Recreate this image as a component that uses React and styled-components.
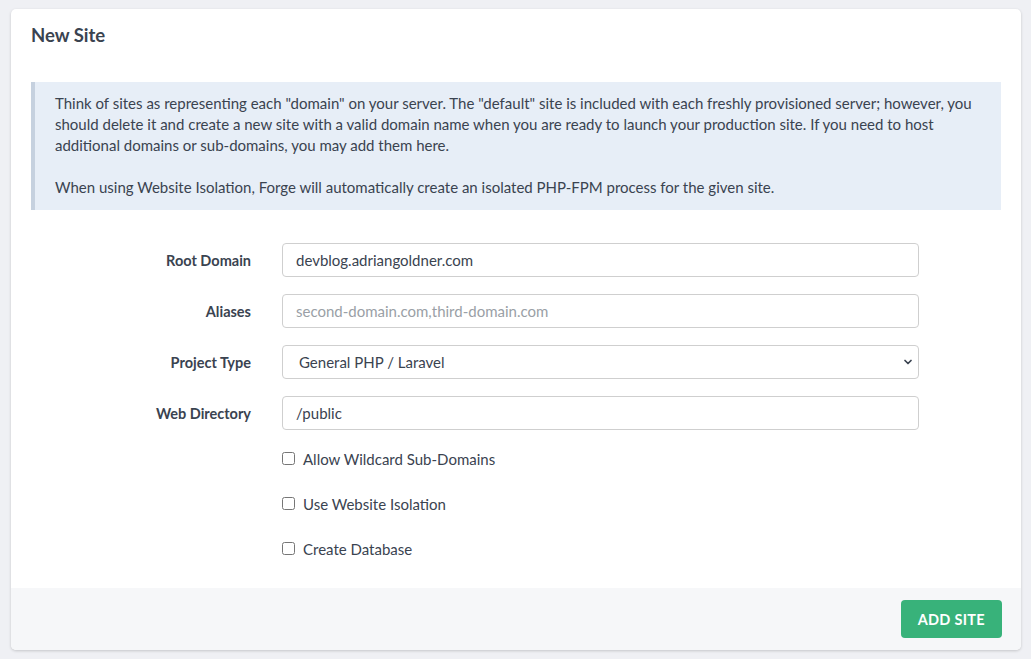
import React from "react";
import styled, { createGlobalStyle } from "styled-components";
import { ChevronDown } from "lucide-react";

const Global = createGlobalStyle`
  * { box-sizing: border-box; }
  body {
    margin: 0;
    background: #eff0f4;
    font-family: "Lato", "Noto Sans", sans-serif;
    color: #3a4350;
  }
`;

const Page = styled.div`
  padding: 9px 10px 8px 11px;
`;

const Card = styled.div`
  background: #fff;
  border-radius: 5px;
  box-shadow: 0 1px 3px rgba(0, 0, 0, 0.18);
  overflow: hidden;
`;

const CardHeader = styled.div`
  padding: 15px 20px 16px;
  font-size: 18.5px;
  font-weight: 700;
  color: #3a4350;
`;

const CardBody = styled.div`
  padding: 20px 20px 29px;
`;

const Notice = styled.div`
  background: #e7eef7;
  border-left: 4px solid #c6d1df;
  padding: 11px 20px 12px;
  font-size: 15px;
  line-height: 21px;
  color: #3a4350;
  margin-bottom: 33px;

  p {
    margin: 0;
  }
  p + p {
    margin-top: 21px;
  }
`;

const Row = styled.div`
  display: grid;
  grid-template-columns: 220px 637px;
  column-gap: 31px;
  align-items: center;
  margin-bottom: ${(p) => p.$gap ?? 17}px;
`;

const Label = styled.label`
  text-align: right;
  font-size: 14.5px;
  font-weight: 700;
  color: #3a4350;
`;

const Input = styled.input`
  height: 34px;
  width: 100%;
  border: 1px solid #cfcfcf;
  border-radius: 4px;
  padding: 0 13px;
  font-family: inherit;
  font-size: 15px;
  color: #3a4350;
  outline: none;

  &::placeholder {
    color: #9a9fa6;
  }
`;

const SelectWrap = styled.div`
  position: relative;
`;

const Select = styled.select`
  appearance: none;
  height: 34px;
  width: 100%;
  border: 1px solid #cfcfcf;
  border-radius: 4px;
  padding: 0 16px;
  background: #fff;
  font-family: inherit;
  font-size: 15px;
  color: #3a4350;
  outline: none;
`;

const Chevron = styled(ChevronDown)`
  position: absolute;
  right: 5px;
  top: 11px;
  pointer-events: none;
`;

const Check = styled.label`
  display: flex;
  align-items: center;
  gap: 8px;
  font-size: 15px;
  color: #3a4350;
  height: 21px;

  input {
    margin: 0;
    width: 13px;
    height: 13px;
  }
`;

const Footer = styled.div`
  background: #f6f7f9;
  padding: 12px 19px 12px;
  display: flex;
  justify-content: flex-end;
`;

const Button = styled.button`
  background: #38b27a;
  color: #fff;
  border: none;
  border-radius: 4px;
  height: 38px;
  padding: 0 17px;
  font-family: inherit;
  font-size: 14.5px;
  font-weight: 700;
  letter-spacing: 0.3px;
  cursor: pointer;
`;

const fields = [
  { label: "Root Domain", value: "devblog.adriangoldner.com" },
  { label: "Aliases", placeholder: "second-domain.com,third-domain.com" },
];

const checks = ["Allow Wildcard Sub-Domains", "Use Website Isolation", "Create Database"];

export default function App() {
  return (
    <Page>
      <Global />
      <Card>
        <CardHeader>New Site</CardHeader>
        <CardBody>
          <Notice>
            <p>
              Think of sites as representing each "domain" on your server. The "default" site is included
              with each freshly provisioned server; however, you should delete it and create a new site with
              a valid domain name when you are ready to launch your production site. If you need to host
              additional domains or sub-domains, you may add them here.
            </p>
            <p>
              When using Website Isolation, Forge will automatically create an isolated PHP-FPM process for
              the given site.
            </p>
          </Notice>

          {fields.map((f) => (
            <Row key={f.label}>
              <Label>{f.label}</Label>
              <Input defaultValue={f.value} placeholder={f.placeholder} />
            </Row>
          ))}

          <Row>
            <Label>Project Type</Label>
            <SelectWrap>
              <Select defaultValue="php">
                <option value="php">General PHP / Laravel</option>
              </Select>
              <Chevron size={12} strokeWidth={3.5} color="#3a4350" />
            </SelectWrap>
          </Row>

          <Row $gap={18}>
            <Label>Web Directory</Label>
            <Input defaultValue="/public" />
          </Row>

          {checks.map((c, i) => (
            <Row key={c} $gap={i === checks.length - 1 ? 0 : 24}>
              <span />
              <Check>
                <input type="checkbox" />
                {c}
              </Check>
            </Row>
          ))}
        </CardBody>
        <Footer>
          <Button>ADD SITE</Button>
        </Footer>
      </Card>
    </Page>
  );
}
